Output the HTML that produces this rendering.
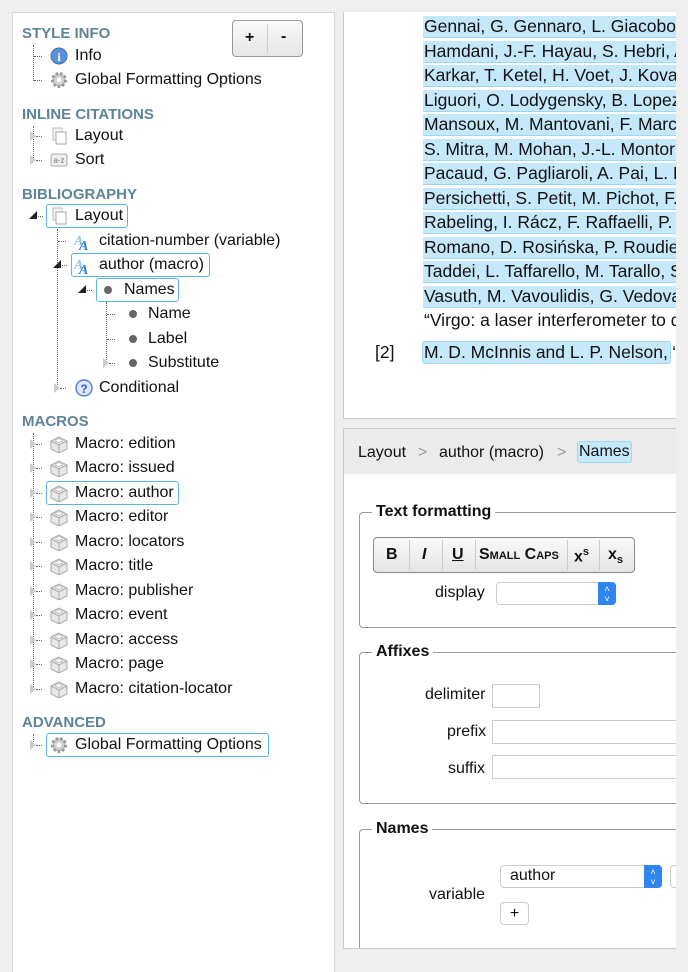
<!DOCTYPE html>
<html><head><meta charset="utf-8"><style>
*{margin:0;padding:0;box-sizing:border-box}
body{width:688px;height:960px;background:#efefef;font-family:"Liberation Sans",Arial,sans-serif;font-size:16px;color:#111;position:relative;overflow:hidden}
.a{position:absolute;white-space:nowrap}
.h{position:absolute;font-weight:bold;font-size:15px;color:#5e8499;line-height:18px}
.t{position:absolute;line-height:22px;white-space:nowrap}
.box{position:absolute;border:1px solid #5fb3e0;border-radius:3px;height:24px}
.ic{position:absolute;width:18px;height:18px}
.dot{position:absolute;width:8px;height:8px;border-radius:50%;background:#666}
.vl{position:absolute;border-left:1px dotted #666;width:0}
.hl{position:absolute;border-top:1px dotted #666;height:0;width:8px}
.tri{position:absolute;width:0;height:0;border-top:5px solid transparent;border-bottom:5px solid transparent;border-left:6px solid #ccc}
.trd{position:absolute;width:0;height:0;border-left:8px solid transparent;border-bottom:8px solid #222}
.hi{position:absolute;left:423px;width:253px;height:22px;background:#c5e8fb;border-bottom:1px solid #9fd6f2}
.ln{position:absolute;left:424px;line-height:23px;white-space:nowrap;font-size:17.5px}
fieldset{position:absolute;border:1px solid #999;border-right:none;border-radius:4px 0 0 4px;margin:0}
.lg{position:absolute;font-weight:bold;background:#fff;padding:0 4px;line-height:20px}
.inp{position:absolute;background:#fff;border:1px solid #ccc;height:24px}
</style></head><body>
<div class="a" style="left:12px;top:12px;width:323px;height:960px;background:#fff;border:1px solid #d6d6d6;border-bottom:none"></div>
<div class="a" style="left:232px;top:20px;width:71px;height:37px;border:1px solid #999;border-radius:4px;background:linear-gradient(#fafafa,#e6e6e6)"></div>
<div class="a" style="left:267px;top:24px;width:1px;height:29px;background:#ccc"></div>
<div class="a" style="left:245px;top:29px;font-weight:bold;font-size:16px">+</div>
<div class="a" style="left:281px;top:28px;font-weight:bold;font-size:16px">-</div>

<svg width="0" height="0" style="position:absolute"><defs>
<g id="gear"><circle cx="9" cy="9" r="6.5" fill="#bbb" stroke="#999" stroke-width="3" stroke-dasharray="2.5 2"/><circle cx="9" cy="9" r="5" fill="#d4d4d4"/><circle cx="9" cy="9" r="2.3" fill="#fff"/></g>
<g id="cube"><path d="M1 6 L9 2 L17 6 L17 14 L9 18 L1 14 Z" fill="#e8e8e8" stroke="#aaa"/><path d="M1 6 L9 10 L17 6 M9 10 V18" fill="none" stroke="#aaa"/><ellipse cx="9" cy="5.5" rx="3.5" ry="1.7" fill="#fff" stroke="#bbb"/></g>
<g id="pages"><rect x="3" y="1" width="9" height="12" fill="#f4f4f4" stroke="#bbb"/><rect x="6" y="5" width="10" height="12" fill="#fff" stroke="#aaa"/></g>
<g id="aa"><text x="1" y="13" font-size="14" font-weight="bold" font-style="italic" fill="#8ac0ef" font-family="Liberation Serif">A</text><text x="6" y="18" font-size="14" font-weight="bold" font-style="italic" fill="#2d7fd6" font-family="Liberation Serif">A</text></g>
</defs></svg>

<div class="h" style="left:22px;top:25px">STYLE INFO</div>
<div class="vl" style="left:33px;top:45px;height:36px"></div>
<div class="hl" style="left:34px;top:56px"></div><div class="hl" style="left:34px;top:80px"></div>
<svg class="ic" style="left:50px;top:47px"><circle cx="9" cy="9" r="8" fill="#5b93d8" stroke="#3a6fb8"/><text x="9" y="14" text-anchor="middle" font-size="12" font-weight="bold" fill="#fff" font-family="Liberation Serif">i</text></svg>
<div class="t" style="left:75px;top:45px">Info</div>
<svg class="ic" style="left:50px;top:71px"><use href="#gear"/></svg>
<div class="t" style="left:75px;top:69px">Global Formatting Options</div>

<div class="h" style="left:22px;top:106px">INLINE CITATIONS</div>
<div class="vl" style="left:33px;top:126px;height:36px"></div>
<div class="tri" style="left:30px;top:131px"></div><div class="hl" style="left:36px;top:136px;width:6px"></div>
<div class="tri" style="left:30px;top:155px"></div><div class="hl" style="left:36px;top:160px;width:6px"></div>
<svg class="ic" style="left:50px;top:127px"><use href="#pages"/></svg>
<div class="t" style="left:75px;top:125px">Layout</div>
<svg class="ic" style="left:50px;top:151px"><rect x="1" y="3" width="16" height="12" rx="2" fill="#eee" stroke="#aaa"/><text x="9" y="12" text-anchor="middle" font-size="8" fill="#777">a-z</text></svg>
<div class="t" style="left:75px;top:149px">Sort</div>

<div class="h" style="left:22px;top:186px">BIBLIOGRAPHY</div>
<div class="trd" style="left:29px;top:211px"></div><div class="hl" style="left:38px;top:216px;width:5px"></div>
<div class="box" style="left:46px;top:204px;width:82px"></div>
<svg class="ic" style="left:50px;top:207px"><use href="#pages"/></svg>
<div class="t" style="left:75px;top:205px">Layout</div>
<div class="vl" style="left:57px;top:229px;height:160px"></div>
<div class="hl" style="left:58px;top:241px"></div>
<svg class="ic" style="left:73px;top:232px"><use href="#aa"/></svg>
<div class="t" style="left:99px;top:230px">citation-number (variable)</div>
<div class="trd" style="left:53px;top:260px"></div><div class="hl" style="left:62px;top:265px;width:5px"></div>
<div class="box" style="left:71px;top:253px;width:139px"></div>
<svg class="ic" style="left:73px;top:256px"><use href="#aa"/></svg>
<div class="t" style="left:99px;top:254px">author (macro)</div>
<div class="trd" style="left:78px;top:285px"></div><div class="hl" style="left:87px;top:290px;width:5px"></div>
<div class="box" style="left:96px;top:278px;width:83px"></div>
<div class="dot" style="left:104px;top:286px"></div>
<div class="t" style="left:124px;top:279px">Names</div>
<div class="vl" style="left:106px;top:302px;height:62px"></div>
<div class="hl" style="left:107px;top:314px"></div><div class="hl" style="left:107px;top:339px"></div>
<div class="tri" style="left:103px;top:358px"></div><div class="hl" style="left:109px;top:363px;width:6px"></div>
<div class="dot" style="left:129px;top:310px"></div><div class="t" style="left:148px;top:303px">Name</div>
<div class="dot" style="left:129px;top:335px"></div><div class="t" style="left:148px;top:328px">Label</div>
<div class="dot" style="left:129px;top:359px"></div><div class="t" style="left:148px;top:352px">Substitute</div>
<div class="tri" style="left:54px;top:383px"></div><div class="hl" style="left:60px;top:388px;width:6px"></div>
<svg class="ic" style="left:75px;top:379px"><circle cx="9" cy="9" r="8" fill="#dde6fb" stroke="#5b7fd8" stroke-width="1.5"/><text x="9" y="14" text-anchor="middle" font-size="12" font-weight="bold" fill="#3a5fc8">?</text></svg>
<div class="t" style="left:99px;top:377px">Conditional</div>

<div class="h" style="left:22px;top:413px">MACROS</div>
<div class="vl" style="left:33px;top:433px;height:258px"></div>
<div class="box" style="left:46px;top:481px;width:133px"></div>
<div class="tri" style="left:30px;top:439px"></div><div class="hl" style="left:36px;top:444px;width:6px"></div><svg class="ic" style="left:50px;top:435px"><use href="#cube"/></svg><div class="t" style="left:75px;top:433px">Macro: edition</div>
<div class="tri" style="left:30px;top:463px"></div><div class="hl" style="left:36px;top:468px;width:6px"></div><svg class="ic" style="left:50px;top:459px"><use href="#cube"/></svg><div class="t" style="left:75px;top:457px">Macro: issued</div>
<div class="tri" style="left:30px;top:488px"></div><div class="hl" style="left:36px;top:493px;width:6px"></div><svg class="ic" style="left:50px;top:484px"><use href="#cube"/></svg><div class="t" style="left:75px;top:482px">Macro: author</div>
<div class="tri" style="left:30px;top:512px"></div><div class="hl" style="left:36px;top:517px;width:6px"></div><svg class="ic" style="left:50px;top:508px"><use href="#cube"/></svg><div class="t" style="left:75px;top:506px">Macro: editor</div>
<div class="tri" style="left:30px;top:537px"></div><div class="hl" style="left:36px;top:542px;width:6px"></div><svg class="ic" style="left:50px;top:533px"><use href="#cube"/></svg><div class="t" style="left:75px;top:531px">Macro: locators</div>
<div class="tri" style="left:30px;top:561px"></div><div class="hl" style="left:36px;top:566px;width:6px"></div><svg class="ic" style="left:50px;top:557px"><use href="#cube"/></svg><div class="t" style="left:75px;top:555px">Macro: title</div>
<div class="tri" style="left:30px;top:586px"></div><div class="hl" style="left:36px;top:591px;width:6px"></div><svg class="ic" style="left:50px;top:582px"><use href="#cube"/></svg><div class="t" style="left:75px;top:580px">Macro: publisher</div>
<div class="tri" style="left:30px;top:610px"></div><div class="hl" style="left:36px;top:615px;width:6px"></div><svg class="ic" style="left:50px;top:606px"><use href="#cube"/></svg><div class="t" style="left:75px;top:604px">Macro: event</div>
<div class="tri" style="left:30px;top:635px"></div><div class="hl" style="left:36px;top:640px;width:6px"></div><svg class="ic" style="left:50px;top:631px"><use href="#cube"/></svg><div class="t" style="left:75px;top:629px">Macro: access</div>
<div class="tri" style="left:30px;top:659px"></div><div class="hl" style="left:36px;top:664px;width:6px"></div><svg class="ic" style="left:50px;top:655px"><use href="#cube"/></svg><div class="t" style="left:75px;top:653px">Macro: page</div>
<div class="tri" style="left:30px;top:684px"></div><div class="hl" style="left:36px;top:689px;width:6px"></div><svg class="ic" style="left:50px;top:680px"><use href="#cube"/></svg><div class="t" style="left:75px;top:678px">Macro: citation-locator</div>

<div class="h" style="left:22px;top:714px">ADVANCED</div>
<div class="vl" style="left:33px;top:734px;height:12px"></div>
<div class="tri" style="left:30px;top:740px"></div><div class="hl" style="left:36px;top:745px;width:6px"></div>
<div class="box" style="left:46px;top:733px;width:223px"></div>
<svg class="ic" style="left:50px;top:736px"><use href="#gear"/></svg>
<div class="t" style="left:75px;top:734px">Global Formatting Options</div>

<div class="a" style="left:343px;top:12px;width:333px;height:407px;background:#fff;border:1px solid #ccc;border-right:none;border-top:none;overflow:hidden"></div>
<div class="hi" style="top:16px"></div><div class="ln" style="top:15px">Gennai, G. Gennaro, L. Giacobone</div>
<div class="hi" style="top:41px"></div><div class="ln" style="top:40px">Hamdani, J.-F. Hayau, S. Hebri, A.</div>
<div class="hi" style="top:65px"></div><div class="ln" style="top:64px">Karkar, T. Ketel, H. Voet, J. Kovale</div>
<div class="hi" style="top:90px"></div><div class="ln" style="top:89px">Liguori, O. Lodygensky, B. Lopez</div>
<div class="hi" style="top:114px"></div><div class="ln" style="top:113px">Mansoux, M. Mantovani, F. Marche</div>
<div class="hi" style="top:139px"></div><div class="ln" style="top:138px">S. Mitra, M. Mohan, J.-L. Montorio</div>
<div class="hi" style="top:163px"></div><div class="ln" style="top:162px">Pacaud, G. Pagliaroli, A. Pai, L. Pa</div>
<div class="hi" style="top:188px"></div><div class="ln" style="top:187px">Persichetti, S. Petit, M. Pichot, F.</div>
<div class="hi" style="top:212px"></div><div class="ln" style="top:211px">Rabeling, I. Rácz, F. Raffaelli, P. R</div>
<div class="hi" style="top:237px"></div><div class="ln" style="top:236px">Romano, D. Rosińska, P. Roudier</div>
<div class="hi" style="top:261px"></div><div class="ln" style="top:260px">Taddei, L. Taffarello, M. Tarallo, S.</div>
<div class="hi" style="top:286px"></div><div class="ln" style="top:285px">Vasuth, M. Vavoulidis, G. Vedovato</div>
<div class="ln" style="top:309px">“Virgo: a laser interferometer to de</div>
<div class="ln" style="left:375px;top:341px">[2]</div>
<div class="a" style="left:422px;top:341px;width:249px;height:23px;background:#c5e8fb;border:1px solid #9fd6f2;border-radius:3px"></div>
<div class="ln" style="top:341px">M. D. McInnis and L. P. Nelson, “</div>
<div class="a" style="left:676px;top:0;width:12px;height:960px;background:#efefef"></div>

<div class="a" style="left:343px;top:428px;width:333px;height:521px;background:#fff;border:1px solid #ccc;border-right:none;overflow:hidden">
 <div class="a" style="left:0;top:0;width:333px;height:45px;background:#ebebeb"></div>
 <div class="t" style="left:14px;top:13px">Layout</div>
 <div class="t" style="left:74px;top:13px;color:#999">&gt;</div>
 <div class="t" style="left:95px;top:13px">author (macro)</div>
 <div class="t" style="left:213px;top:13px;color:#999">&gt;</div>
 <div class="a" style="left:233px;top:12px;width:55px;height:22px;background:#c5e8fb;border:1px solid #9fd6f2;border-radius:3px"></div>
 <div class="t" style="left:235px;top:12px">Names</div>

 <fieldset style="left:15px;top:83px;width:330px;height:116px"></fieldset>
 <div class="lg" style="left:28px;top:73px">Text formatting</div>
 <div class="a" style="left:29px;top:108px;width:262px;height:36px;border:1px solid #888;border-radius:4px;background:linear-gradient(#fbfbfb,#e4e4e4);font-weight:bold;font-size:16px">
  <span class="a" style="left:12px;top:8px">B</span>
  <span class="a" style="left:35px;top:2px;width:1px;height:30px;background:#ccc"></span>
  <span class="a" style="left:48px;top:8px;font-style:italic">I</span>
  <span class="a" style="left:68px;top:2px;width:1px;height:30px;background:#ccc"></span>
  <span class="a" style="left:78px;top:8px;text-decoration:underline">U</span>
  <span class="a" style="left:101px;top:2px;width:1px;height:30px;background:#ccc"></span>
  <span class="a" style="left:105px;top:8px;font-variant:small-caps;font-size:16px">Small Caps</span>
  <span class="a" style="left:193px;top:2px;width:1px;height:30px;background:#ccc"></span>
  <span class="a" style="left:200px;top:8px">x<sup style="font-size:11px">s</sup></span>
  <span class="a" style="left:225px;top:2px;width:1px;height:30px;background:#ccc"></span>
  <span class="a" style="left:234px;top:8px">x<sub style="font-size:11px">s</sub></span>
 </div>
 <div class="t" style="left:91px;top:153px">display</div>
 <div class="a" style="left:152px;top:153px;width:120px;height:23px;border:1px solid #ccc;border-radius:4px;background:#fff"></div>
 <div class="a" style="left:254px;top:153px;width:18px;height:23px;background:#2f86f0;border-radius:0 4px 4px 0;color:#fff;font-size:9px;line-height:10px;text-align:center;padding-top:2px">˄<br>˅</div>

 <fieldset style="left:15px;top:223px;width:330px;height:152px"></fieldset>
 <div class="lg" style="left:28px;top:213px">Affixes</div>
 <div class="t" style="left:81px;top:255px">delimiter</div>
 <div class="inp" style="left:148px;top:255px;width:48px"></div>
 <div class="t" style="left:103px;top:292px">prefix</div>
 <div class="inp" style="left:148px;top:291px;width:200px"></div>
 <div class="t" style="left:104px;top:329px">suffix</div>
 <div class="inp" style="left:148px;top:326px;width:200px"></div>

 <fieldset style="left:15px;top:400px;width:330px;height:140px"></fieldset>
 <div class="lg" style="left:28px;top:390px">Names</div>
 <div class="a" style="left:156px;top:436px;width:162px;height:23px;border:1px solid #ccc;border-radius:4px;background:#fff"></div>
 <div class="t" style="left:166px;top:436px">author</div>
 <div class="a" style="left:300px;top:436px;width:18px;height:23px;background:#2f86f0;border-radius:0 4px 4px 0;color:#fff;font-size:9px;line-height:10px;text-align:center;padding-top:2px">˄<br>˅</div>
 <div class="a" style="left:326px;top:436px;width:20px;height:23px;border:1px solid #ccc;border-radius:4px"></div>
 <div class="t" style="left:85px;top:455px">variable</div>
 <div class="a" style="left:156px;top:473px;width:29px;height:23px;border:1px solid #ccc;border-radius:4px;background:#fff;text-align:center;line-height:21px">+</div>
</div>
</body></html>
